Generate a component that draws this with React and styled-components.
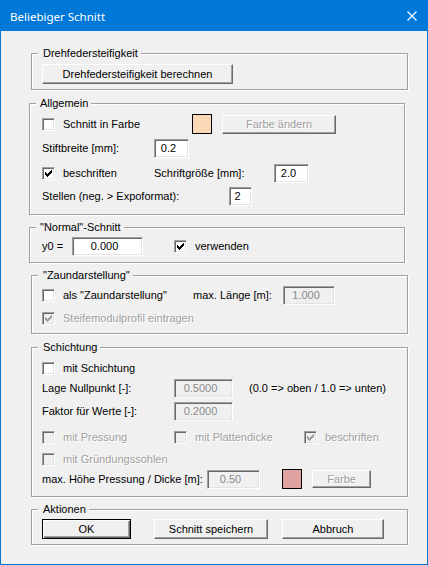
import React from 'react';
import styled, { createGlobalStyle } from 'styled-components';

const GlobalStyle = createGlobalStyle`
  body {
    margin: 0;
    background: #f0f0f0;
    font-family: "Liberation Sans", Arial, sans-serif;
    font-size: 11px;
    line-height: 13px;
    color: #000;
  }
`;

const Window = styled.div`
  width: 428px;
  height: 565px;
  box-sizing: border-box;
  border: 1px solid #0078d7;
  background: #f0f0f0;
  display: flex;
  flex-direction: column;
`;

const TitleBar = styled.div`
  height: 30px;
  flex: none;
  background: #0078d7;
  color: #fff;
  display: flex;
  align-items: center;
  justify-content: space-between;
  padding: 0 10px 0 9px;
  font-family: "Noto Sans", sans-serif;
  font-size: 11.5px;
`;

const Client = styled.div`
  display: flex;
  flex-direction: column;
`;

const Frame = styled.fieldset`
  margin: ${p => p.$mt}px 0 0 ${p => p.$x - 1}px;
  width: ${p => p.$w}px;
  box-sizing: border-box;
  min-inline-size: 0;
  padding: 0 0 ${p => p.$pb}px ${p => 41 - p.$x}px;
  border: 1px solid #a0a0a0;
  box-shadow: inset 1px 1px 0 #fff, 1px 1px 0 #fff;
`;

const Legend = styled.legend`
  margin-left: ${p => (p.$wide ? -6 : -4)}px;
  padding: 0 3px 0 ${p => (p.$wide ? 4 : 5)}px;
  background: #f0f0f0;
  line-height: 13px;
`;

const Row = styled.div`
  display: flex;
  align-items: center;
  height: ${p => p.$h}px;
  margin-top: ${p => p.$mt}px;
`;

const Label = styled.span`
  flex: none;
  width: ${p => (p.$w ? `${p.$w}px` : 'auto')};
  color: ${p => (p.$disabled ? '#a0a0a0' : '#000')};
  text-shadow: ${p => (p.$disabled ? '1px 1px 0 #fff' : 'none')};
  margin-left: ${p => p.$ml || 0}px;
  white-space: nowrap;
`;

const CheckItem = styled.div`
  flex: none;
  display: flex;
  align-items: center;
  gap: 8px;
  width: ${p => (p.$w ? `${p.$w}px` : 'auto')};
`;

const Box = styled.span`
  flex: none;
  width: 13px;
  height: 13px;
  box-sizing: border-box;
  border: 1px solid;
  border-color: #a0a0a0 #fff #fff #a0a0a0;
  box-shadow: inset 1px 1px 0 #696969, inset -1px -1px 0 #e3e3e3;
  background: ${p => (p.$disabled ? '#f0f0f0' : '#fff')};
  display: flex;
  align-items: center;
  justify-content: center;
`;

const Field = styled.div`
  flex: none;
  width: ${p => p.$w}px;
  height: ${p => p.$h || 19}px;
  box-sizing: border-box;
  border: 1px solid;
  border-color: #a0a0a0 #fff #fff #a0a0a0;
  box-shadow: inset 1px 1px 0 #696969, inset -1px -1px 0 #e3e3e3;
  background: ${p => (p.$disabled ? '#f0f0f0' : '#fff')};
  color: ${p => (p.$disabled ? '#8a8a8a' : '#000')};
  display: flex;
  align-items: center;
  justify-content: center;
  padding-right: 6px;
`;

const Swatch = styled.div`
  flex: none;
  width: 20px;
  height: 20px;
  box-sizing: border-box;
  border: 1px solid #000;
  background: ${p => p.$color};
  margin-left: ${p => p.$ml || 0}px;
`;

const Button = styled.div`
  flex: none;
  width: ${p => p.$w}px;
  height: ${p => p.$h || 20}px;
  margin-left: ${p => p.$ml || 0}px;
  box-sizing: border-box;
  display: flex;
  align-items: center;
  justify-content: center;
  background: #f0f0f0;
  border: 1px solid;
  border-color: ${p => (p.$default ? '#000' : '#fff #696969 #696969 #fff')};
  box-shadow: ${p =>
    p.$default
      ? 'inset 1px 1px 0 #fff, inset -1px -1px 0 #696969, inset -2px -2px 0 #a0a0a0'
      : 'inset -1px -1px 0 #a0a0a0'};
  color: ${p => (p.$disabled ? '#a0a0a0' : '#000')};
  text-shadow: ${p => (p.$disabled ? '1px 1px 0 #fff' : 'none')};
`;

const CHECK = 'M0 2h1v3H0z M1 3h1v3H1z M2 4h1v3H2z M3 3h1v3H3z M4 2h1v3H4z M5 1h1v3H5z M6 0h1v3H6z';

function Check({ checked, disabled, label, w }) {
  return (
    <CheckItem $w={w}>
      <Box $disabled={disabled}>
        {checked && (
          <svg width="7" height="7" viewBox="0 0 7 7">
            <path d={CHECK} fill={disabled ? '#a0a0a0' : '#000'} />
          </svg>
        )}
      </Box>
      <Label $disabled={disabled}>{label}</Label>
    </CheckItem>
  );
}

function CloseIcon() {
  return (
    <svg width="10" height="10" viewBox="0 0 10 10">
      <path d="M0.5 0.5L9.5 9.5M9.5 0.5L0.5 9.5" stroke="#fff" strokeWidth="1.1" />
    </svg>
  );
}

export default function App() {
  return (
    <>
      <GlobalStyle />
      <Window>
        <TitleBar>
          <span>Beliebiger Schnitt</span>
          <CloseIcon />
        </TitleBar>
        <Client>
          <Frame $x={31} $w={377} $mt={16} $pb={5}>
            <Legend>Drehfedersteifigkeit</Legend>
            <Row $mt={4} $h={20}>
              <Button $w={191}>Drehfedersteifigkeit berechnen</Button>
            </Row>
          </Frame>

          <Frame $x={29} $w={376} $mt={7} $pb={8}>
            <Legend $wide>Allgemein</Legend>
            <Row $mt={4} $h={20}>
              <Check label="Schnitt in Farbe" w={150} />
              <Swatch $color="#fcd9b6" />
              <Button $w={114} $h={19} $ml={10} $disabled>Farbe ändern</Button>
            </Row>
            <Row $mt={5} $h={19}>
              <Label $w={112}>Stiftbreite [mm]:</Label>
              <Field $w={35}>0.2</Field>
            </Row>
            <Row $mt={6} $h={19}>
              <Check label="beschriften" checked w={112} />
              <Label $w={120}>Schriftgröße [mm]:</Label>
              <Field $w={35}>2.0</Field>
            </Row>
            <Row $mt={4} $h={19}>
              <Label $w={187}>Stellen (neg. &gt; Expoformat):</Label>
              <Field $w={23}>2</Field>
            </Row>
          </Frame>

          <Frame $x={29} $w={376} $mt={6} $pb={6}>
            <Legend $wide>"Normal"-Schnitt</Legend>
            <Row $mt={3} $h={19}>
              <Label $w={30}>y0 =</Label>
              <Field $w={71}>0.000</Field>
              <CheckItem style={{ marginLeft: 31 }}>
                <Box>
                  <svg width="7" height="7" viewBox="0 0 7 7">
                    <path d={CHECK} fill="#000" />
                  </svg>
                </Box>
                <Label>verwenden</Label>
              </CheckItem>
            </Row>
          </Frame>

          <Frame $x={31} $w={377} $mt={6} $pb={6}>
            <Legend>"Zaundarstellung"</Legend>
            <Row $mt={4} $h={19}>
              <Check label={'als "Zaundarstellung"'} w={151} />
              <Label $w={90}>max. Länge [m]:</Label>
              <Field $w={52} $disabled>1.000</Field>
            </Row>
            <Row $mt={5} $h={17}>
              <Check label="Steifemodulprofil eintragen" checked disabled />
            </Row>
          </Frame>

          <Frame $x={31} $w={377} $mt={7} $pb={7}>
            <Legend>Schichtung</Legend>
            <Row $mt={6} $h={17}>
              <Check label="mit Schichtung" />
            </Row>
            <Row $mt={2} $h={19}>
              <Label $w={132}>Lage Nullpunkt [-]:</Label>
              <Field $w={59} $disabled>0.5000</Field>
              <Label $ml={16}>(0.0 =&gt; oben / 1.0 =&gt; unten)</Label>
            </Row>
            <Row $mt={4} $h={19}>
              <Label $w={132}>Faktor für Werte [-]:</Label>
              <Field $w={59} $disabled>0.2000</Field>
            </Row>
            <Row $mt={8} $h={17}>
              <Check label="mit Pressung" disabled w={132} />
              <Check label="mit Plattendicke" disabled w={130} />
              <Check label="beschriften" checked disabled />
            </Row>
            <Row $mt={5} $h={17}>
              <Check label="mit Gründungssohlen" disabled />
            </Row>
            <Row $mt={1} $h={20}>
              <Label $w={165}>max. Höhe Pressung / Dicke [m]:</Label>
              <Field $w={53} $disabled>0.50</Field>
              <Swatch $color="#e0a2a2" $ml={22} />
              <Button $w={59} $h={18} $ml={10} $disabled>Farbe</Button>
            </Row>
          </Frame>

          <Frame $x={31} $w={377} $mt={6} $pb={5}>
            <Legend>Aktionen</Legend>
            <Row $mt={3} $h={20}>
              <Button $w={89} $default>OK</Button>
              <Button $w={114} $ml={23}>Schnitt speichern</Button>
              <Button $w={102} $ml={14}>Abbruch</Button>
            </Row>
          </Frame>
        </Client>
      </Window>
    </>
  );
}
